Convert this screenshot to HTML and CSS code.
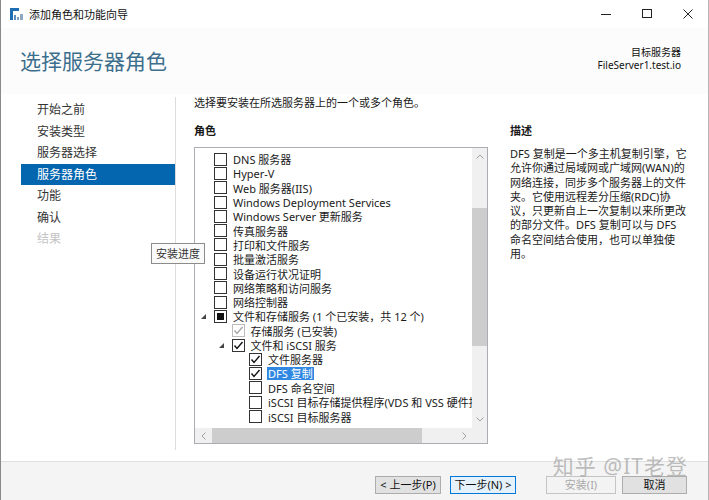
FILE: index.html
```html
<!DOCTYPE html>
<html lang="zh-CN">
<head>
    <meta charset="UTF-8">
    <meta name="viewport" content="width=device-width, initial-scale=1.0">
    <title>添加角色和功能向导</title>
    <link rel="stylesheet" href="styles.css">
</head>
<body>
<div class="window">
    <div class="titlebar">
        <svg class="app-icon" width="14" height="12" viewBox="0 0 14 12">
            <rect x="0" y="0" width="9" height="3" fill="#1e6db3"/>
            <rect x="0" y="0" width="3" height="12" fill="#1e6db3"/>
            <rect x="4" y="7" width="2" height="5" fill="#5b8ec2"/>
            <rect x="7" y="9" width="2" height="3" fill="#7d9dbb"/>
            <rect x="10" y="6" width="3" height="6" fill="#8ea8bf"/>
        </svg>
        <span class="title">添加角色和功能向导</span>
        <div class="controls">
            <div class="ctl"><svg width="10" height="10" viewBox="0 0 10 10"><line x1="0" y1="5.5" x2="10" y2="5.5" stroke="#222" stroke-width="1"/></svg></div>
            <div class="ctl"><svg width="10" height="10" viewBox="0 0 10 10"><rect x="0.5" y="0.5" width="9" height="8" fill="none" stroke="#222" stroke-width="1"/></svg></div>
            <div class="ctl"><svg width="10" height="10" viewBox="0 0 10 10"><path d="M0.5 0.5 L9.5 9.5 M9.5 0.5 L0.5 9.5" stroke="#222" stroke-width="1"/></svg></div>
        </div>
    </div>

    <div class="header">
        <h1>选择服务器角色</h1>
        <div class="target">
            <div>目标服务器</div>
            <div>FileServer1.test.io</div>
        </div>
    </div>

    <div class="content">
        <ul class="steps">
            <li>开始之前</li>
            <li>安装类型</li>
            <li>服务器选择</li>
            <li class="active">服务器角色</li>
            <li>功能</li>
            <li>确认</li>
            <li class="disabled">结果</li>
        </ul>
        <div class="tooltip">安装进度</div>

        <div class="main">
            <p class="intro">选择要安装在所选服务器上的一个或多个角色。</p>
            <div class="columns">
                <div class="roles">
                    <div class="label">角色</div>
                    <div class="listbox">
                        <div class="items">
                            <div class="row lv0"><span class="exp"></span><span class="cb"></span><span>DNS 服务器</span></div>
                            <div class="row lv0"><span class="exp"></span><span class="cb"></span><span>Hyper-V</span></div>
                            <div class="row lv0"><span class="exp"></span><span class="cb"></span><span>Web 服务器(IIS)</span></div>
                            <div class="row lv0"><span class="exp"></span><span class="cb"></span><span>Windows Deployment Services</span></div>
                            <div class="row lv0"><span class="exp"></span><span class="cb"></span><span>Windows Server 更新服务</span></div>
                            <div class="row lv0"><span class="exp"></span><span class="cb"></span><span>传真服务器</span></div>
                            <div class="row lv0"><span class="exp"></span><span class="cb"></span><span>打印和文件服务</span></div>
                            <div class="row lv0"><span class="exp"></span><span class="cb"></span><span>批量激活服务</span></div>
                            <div class="row lv0"><span class="exp"></span><span class="cb"></span><span>设备运行状况证明</span></div>
                            <div class="row lv0"><span class="exp"></span><span class="cb"></span><span>网络策略和访问服务</span></div>
                            <div class="row lv0"><span class="exp"></span><span class="cb"></span><span>网络控制器</span></div>
                            <div class="row lv0">
                                <span class="exp"><svg width="5" height="5" viewBox="0 0 5 5"><polygon points="5,0 5,5 0,5" fill="#444"/></svg></span>
                                <span class="cb"><span class="partial"></span></span>
                                <span>文件和存储服务 (1 个已安装，共 12 个)</span>
                            </div>
                            <div class="row lv1">
                                <span class="exp"></span>
                                <span class="cb locked"><svg width="11" height="11" viewBox="0 0 11 11"><polyline points="1.5,5.5 4,8.5 9.5,2" fill="none" stroke="#a6a6a6" stroke-width="1.4"/></svg></span>
                                <span>存储服务 (已安装)</span>
                            </div>
                            <div class="row lv1">
                                <span class="exp"><svg width="5" height="5" viewBox="0 0 5 5"><polygon points="5,0 5,5 0,5" fill="#444"/></svg></span>
                                <span class="cb"><svg width="11" height="11" viewBox="0 0 11 11"><polyline points="1.5,5.5 4,8.5 9.5,2" fill="none" stroke="#111" stroke-width="1.4"/></svg></span>
                                <span>文件和 iSCSI 服务</span>
                            </div>
                            <div class="row lv2">
                                <span class="exp"></span>
                                <span class="cb"><svg width="11" height="11" viewBox="0 0 11 11"><polyline points="1.5,5.5 4,8.5 9.5,2" fill="none" stroke="#111" stroke-width="1.4"/></svg></span>
                                <span>文件服务器</span>
                            </div>
                            <div class="row lv2">
                                <span class="exp"></span>
                                <span class="cb"><svg width="11" height="11" viewBox="0 0 11 11"><polyline points="1.5,5.5 4,8.5 9.5,2" fill="none" stroke="#111" stroke-width="1.4"/></svg></span>
                                <span class="selected">DFS 复制</span>
                            </div>
                            <div class="row lv2"><span class="exp"></span><span class="cb"></span><span>DFS 命名空间</span></div>
                            <div class="row lv2"><span class="exp"></span><span class="cb"></span><span>iSCSI 目标存储提供程序(VDS 和 VSS 硬件提供程序)</span></div>
                            <div class="row lv2"><span class="exp"></span><span class="cb"></span><span>iSCSI 目标服务器</span></div>
                        </div>
                        <div class="vscroll">
                            <div class="sb-btn"><svg width="8" height="5" viewBox="0 0 8 5"><polyline points="0.5,4.5 4,1 7.5,4.5" fill="none" stroke="#a0a0a0"/></svg></div>
                            <div class="v-space"></div>
                            <div class="v-thumb"></div>
                            <div class="fill"></div>
                            <div class="sb-btn"><svg width="8" height="5" viewBox="0 0 8 5"><polyline points="0.5,0.5 4,4 7.5,0.5" fill="none" stroke="#a0a0a0"/></svg></div>
                        </div>
                        <div class="hscroll">
                            <div class="sb-btn"><svg width="5" height="8" viewBox="0 0 5 8"><polyline points="4.5,0.5 1,4 4.5,7.5" fill="none" stroke="#a0a0a0"/></svg></div>
                            <div class="h-thumb"></div>
                            <div class="fill"></div>
                            <div class="sb-btn"><svg width="5" height="8" viewBox="0 0 5 8"><polyline points="0.5,0.5 4,4 0.5,7.5" fill="none" stroke="#a0a0a0"/></svg></div>
                        </div>
                        <div class="corner"></div>
                    </div>
                </div>
                <div class="desc">
                    <div class="label">描述</div>
                    <p>DFS 复制是一个多主机复制引擎，它<br>允许你通过局域网或广域网(WAN)的<br>网络连接，同步多个服务器上的文件<br>夹。它使用远程差分压缩(RDC)协<br>议，只更新自上一次复制以来所更改<br>的部分文件。DFS 复制可以与 DFS<br>命名空间结合使用，也可以单独使<br>用。</p>
                </div>
            </div>
        </div>
    </div>

    <div class="footer">
        <button class="btn prev">&lt; 上一步(P)</button>
        <button class="btn next">下一步(N) &gt;</button>
        <button class="btn install" disabled>安装(I)</button>
        <button class="btn cancel">取消</button>
        <span class="watermark">知乎 @IT老登</span>
    </div>
</div>
</body>
</html>
```

FILE: styles.css
```css
body {
    margin: 0;
    font-family: "Noto Sans", "Noto Sans CJK SC", sans-serif;
    font-size: 11px;
    color: #1a1a1a;
    background: #fff;
}
.window {
    width: 709px;
    height: 500px;
    box-sizing: border-box;
    border-left: 1px solid #8a8a8a;
    border-right: 1px solid #b5b5b5;
    display: flex;
    flex-direction: column;
    position: relative;
    overflow: hidden;
    background: #fff;
}

/* title bar */
.titlebar {
    height: 28px;
    flex: none;
    display: flex;
    align-items: center;
    padding-left: 9px;
}
.app-icon {
    margin-top: -1px;
}
.title {
    margin-left: 5px;
    font-size: 11px;
    color: #111;
}
.controls {
    margin-left: auto;
    display: flex;
    align-self: stretch;
}
.ctl {
    width: 41px;
    display: flex;
    align-items: center;
    justify-content: center;
}

/* header */
.header {
    height: 66px;
    flex: none;
    display: flex;
    align-items: center;
    justify-content: space-between;
    padding: 0 27px 0 19px;
    background: #fcfcfc;
}
.header h1 {
    margin: 0;
    font-size: 21px;
    font-weight: normal;
    line-height: 28px;
    color: #3d6f8d;
}
.target {
    text-align: right;
    font-size: 10px;
    line-height: 13px;
    color: #111;
    margin-top: -4px;
}

/* body */
.content {
    flex: 1;
    display: flex;
    position: relative;
}
.steps {
    list-style: none;
    margin: 3px 0 11px 20px;
    padding: 2px 0 0;
    width: 154px;
    border-right: 1px solid #dcdcdc;
}
.steps li {
    height: 21.5px;
    line-height: 21.5px;
    padding-left: 16px;
    font-size: 12px;
    color: #333;
}
.steps li.active {
    background: #0566b0;
    color: #fff;
}
.steps li.disabled {
    color: #c4c4c4;
}
.tooltip {
    position: absolute;
    left: 150px;
    top: 149px;
    width: 54px;
    height: 21px;
    box-sizing: border-box;
    border: 1px solid #8c8c8c;
    background: #fafafa;
    font-size: 11px;
    line-height: 19px;
    text-align: center;
    color: #333;
}
.main {
    padding: 2px 0 0 18px;
}
.intro {
    margin: 0;
    line-height: 14px;
}
.columns {
    display: flex;
    gap: 22px;
    margin-top: 14px;
}
.label {
    font-weight: bold;
    line-height: 14px;
    margin-bottom: 9px;
}

/* role list */
.listbox {
    width: 294px;
    height: 297px;
    box-sizing: border-box;
    border: 1px solid #abadb3;
    display: grid;
    grid-template-columns: 1fr 15px;
    grid-template-rows: 1fr 15px;
}
.items {
    padding-top: 4px;
    overflow: hidden;
    white-space: nowrap;
}
.row {
    height: 14.3px;
    display: flex;
    align-items: center;
    padding-left: 5px;
}
.row.lv1 {
    padding-left: 22.5px;
}
.row.lv2 {
    padding-left: 40px;
}
.exp {
    width: 14px;
    flex: none;
    display: flex;
    align-items: center;
    padding-left: 1px;
    box-sizing: border-box;
}
.cb {
    width: 13px;
    height: 13px;
    flex: none;
    box-sizing: border-box;
    border: 1px solid #333;
    background: #fff;
    margin-right: 6px;
    display: flex;
    align-items: center;
    justify-content: center;
}
.cb.locked {
    border-color: #bcbcbc;
}
.partial {
    width: 7px;
    height: 7px;
    background: #111;
}
.selected {
    background: #3088e2;
    color: #fff;
    padding: 0 1px;
    margin-left: -1px;
    line-height: 13px;
}
.vscroll {
    background: #f0f0f0;
    display: flex;
    flex-direction: column;
}
.hscroll {
    background: #f0f0f0;
    display: flex;
}
.corner {
    background: #f0f0f0;
}
.sb-btn {
    flex: none;
    width: 15px;
    height: 17px;
    display: flex;
    align-items: center;
    justify-content: center;
}
.hscroll .sb-btn {
    height: 15px;
    width: 16px;
}
.v-space {
    height: 43px;
}
.v-thumb {
    height: 138px;
    background: #cdcdcd;
}
.h-thumb {
    width: 210px;
    margin-left: 1px;
    background: #cdcdcd;
}
.fill {
    flex: 1;
}

/* description */
.desc p {
    margin: 0;
    line-height: 14.3px;
    white-space: nowrap;
    color: #1a1a1a;
}

/* footer */
.footer {
    height: 39px;
    flex: none;
    box-sizing: border-box;
    border-top: 1px solid #dfdfdf;
    background: #f4f4f4;
    display: flex;
    justify-content: flex-end;
    align-items: flex-start;
    padding: 14px 21px 0 0;
    position: relative;
}
.btn {
    width: 66px;
    height: 18px;
    box-sizing: border-box;
    border: 1px solid #adadad;
    background: #e1e1e1;
    font-family: inherit;
    font-size: 11px;
    line-height: 14px;
    padding: 0;
    color: #111;
}
.btn.next {
    margin-left: 9px;
    border-color: #0078d7;
    background: #e5f1fb;
}
.btn.install {
    margin-left: 30px;
    width: 70px;
    border-color: #c4c4c4;
    background: #f3f3f3;
    color: #a8a8a8;
}
.btn.cancel {
    margin-left: 6px;
    width: 65px;
}
.watermark {
    position: absolute;
    right: 20px;
    top: -12px;
    font-size: 21px;
    color: rgba(130, 130, 130, 0.5);
    letter-spacing: 1px;
}
```
